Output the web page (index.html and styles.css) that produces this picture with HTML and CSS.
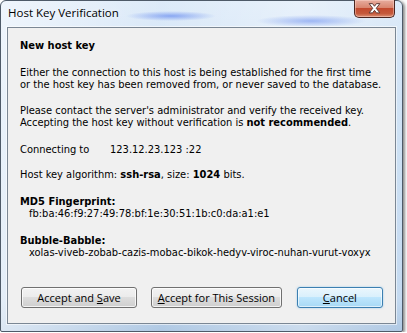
FILE: index.html
```html
<!DOCTYPE html>
<html lang="en">
<head>
  <meta charset="UTF-8">
  <title>Host Key Verification</title>
  <link rel="stylesheet" href="styles.css">
</head>
<body>
  <div class="window">
    <div class="titlebar">
      <span class="title">Host Key Verification</span>
      <button class="close" type="button" aria-label="Close">
        <svg width="40" height="17" viewBox="0 0 40 17">
          <path d="M14.5 3.5 L18 3.5 L20 6.2 L22 3.5 L25.5 3.5 L21.8 8.3 L25.5 13 L22 13 L20 10.4 L18 13 L14.5 13 L18.2 8.3 Z" fill="#fff" stroke="#5b3a36" stroke-width="1" stroke-linejoin="round"/>
        </svg>
      </button>
    </div>
    <div class="client">
      <div class="heading">New host key</div>
      <p class="msg">Either the connection to this host is being established for the first time<br>or the host key has been removed from, or never saved to the database.</p>
      <p class="msg p2">Please contact the server's administrator and verify the received key.<br>Accepting the host key without verification is <b>not recommended</b>.</p>
      <div class="row connect"><span class="label">Connecting to</span><span>123.12.23.123 :22</span></div>
      <div class="row algo">Host key algorithm: <b>ssh-rsa</b>, size: <b>1024</b> bits.</div>
      <div class="field md5">
        <b>MD5 Fingerprint:</b>
        <div class="value">fb:ba:46:f9:27:49:78:bf:1e:30:51:1b:c0:da:a1:e1</div>
      </div>
      <div class="field bubble">
        <b>Bubble-Babble:</b>
        <div class="value">xolas-viveb-zobab-cazis-mobac-bikok-hedyv-viroc-nuhan-vurut-voxyx</div>
      </div>
      <div class="buttons">
        <button class="btn save" type="button">Accept and <u>S</u>ave</button>
        <button class="btn session" type="button"><u>A</u>ccept for This Session</button>
        <button class="btn cancel" type="button"><u>C</u>ancel</button>
      </div>
    </div>
  </div>
</body>
</html>
```

FILE: styles.css
```css
body {
  margin: 0;
  background: #fff;
}
.window {
  width: 403px;
  height: 332px;
  box-sizing: border-box;
  border: 1px solid #4e5a68;
  border-radius: 6px 6px 2px 2px;
  box-shadow: 2px 1px 3px rgba(0, 0, 0, 0.45);
  background:
    radial-gradient(ellipse 45px 5px at 170px 15px, rgba(110, 145, 240, 0.75), rgba(110, 145, 240, 0) 100%),
    radial-gradient(ellipse 55px 6px at 310px 20px, rgba(110, 145, 240, 0.6), rgba(110, 145, 240, 0) 100%),
    linear-gradient(to right, rgba(255, 255, 255, 0.6), rgba(255, 255, 255, 0.1) 40%, rgba(255, 255, 255, 0.4) 75%, rgba(255, 255, 255, 0.1)),
    linear-gradient(to bottom, #d9e8f8, #cadff4 30%, #bdd5ee 90%, #a6c2e0);
  display: flex;
  flex-direction: column;
  padding: 0 6px 7px 6px;
}
.titlebar {
  height: 26px;
  display: flex;
  align-items: flex-start;
  justify-content: space-between;
}
.title {
  font-family: "Open Sans", "Liberation Sans", sans-serif;
  font-size: 11.5px;
  color: #000;
  margin: 4px 0 0 1px;
  text-shadow: 0 0 6px rgba(255, 255, 255, 0.9);
}
.close {
  width: 41px;
  height: 18px;
  margin: -1px 1px 0 0;
  padding: 0;
  border: 1px solid #4a2520;
  border-top: none;
  border-radius: 0 0 5px 5px;
  background: linear-gradient(to bottom, #e7ad9f, #d98670 45%, #c34a2f 50%, #c55a3c 80%, #dc9277);
  box-shadow: inset 0 0 0 1px rgba(255, 220, 210, 0.45);
  display: flex;
}
.client {
  flex: 1;
  border: 1px solid #7b8794;
  box-shadow: 0 0 0 1px rgba(255, 255, 255, 0.55);
  background: #f0f0f0;
  padding: 12px 12px 0 12px;
  font-family: "DejaVu Sans Condensed", "Liberation Sans", sans-serif;
  font-size: 11px;
  line-height: 12px;
  color: #000;
}
.heading {
  font-weight: bold;
}
.msg {
  margin: 15px 0 0;
}
.msg.p2 {
  margin-top: 14px;
}
.row {
  display: flex;
}
.connect {
  margin-top: 15px;
}
.algo {
  display: block;
  margin-top: 13px;
}
.label {
  width: 90px;
}
.field {
  margin-top: 15px;
}
.field .value {
  padding-left: 9px;
}
.buttons {
  display: flex;
  gap: 14px;
  margin: 28px 0 0 1px;
}
.btn {
  height: 21px;
  padding: 0;
  font-family: "Open Sans", "Liberation Sans", sans-serif;
  font-size: 11px;
  color: #000;
  border: 1px solid #707070;
  border-radius: 3px;
  background: linear-gradient(to bottom, #f2f2f2, #ebebeb 49%, #dddddd 50%, #cfcfcf);
  box-shadow: inset 0 0 0 1px rgba(255, 255, 255, 0.75);
}
.save {
  width: 117px;
}
.session {
  width: 132px;
}
.cancel {
  width: 87px;
  margin-left: 1px;
  border-color: #3c7fb1;
  background: linear-gradient(to bottom, #eaf6fd, #d9f0fc 49%, #bee6fd 50%, #a7d9f5);
  box-shadow: inset 0 0 0 1px rgba(255, 255, 255, 0.6), 0 0 2px rgba(60, 160, 230, 0.5);
}
```
